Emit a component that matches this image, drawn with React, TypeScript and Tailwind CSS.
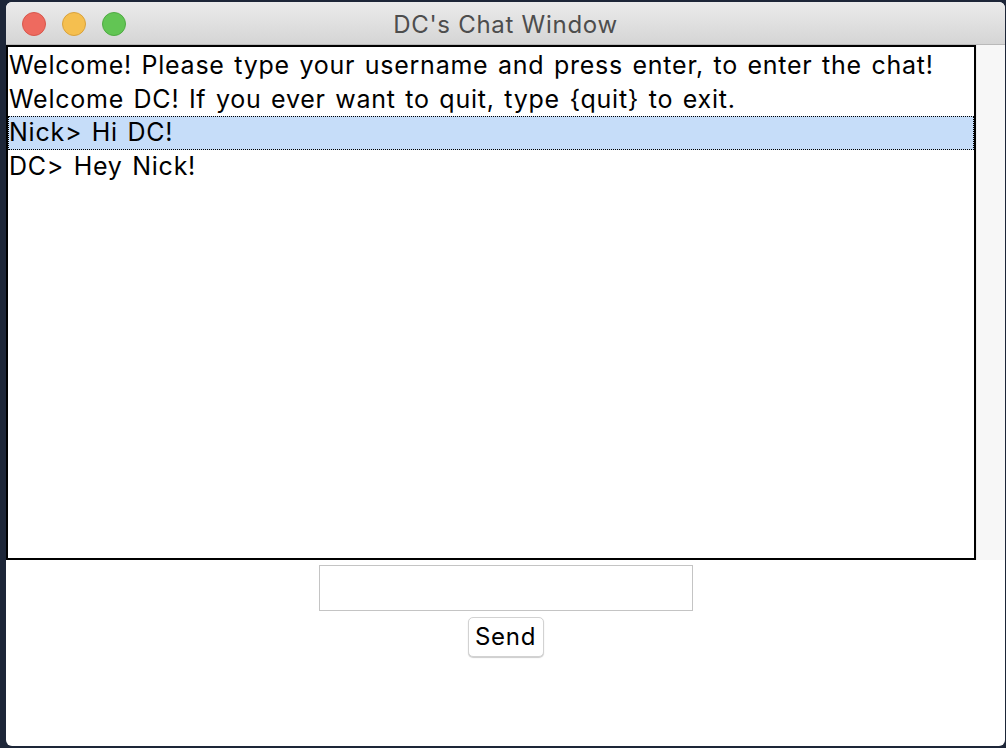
export default function App() {
  const lines = [
    "Welcome! Please type your username and press enter, to enter the chat!",
    "Welcome DC! If you ever want to quit, type {quit} to exit.",
    "Nick> Hi DC!",
    "DC> Hey Nick!",
  ];

  const font = { fontFamily: "Inter, \"Liberation Sans\", sans-serif" };

  return (
    <div className="w-[1006px] h-[748px] bg-[#1d2638] pl-[6px] pt-[2px] overflow-hidden" style={font}>
      <div className="w-[999px] h-[744px] bg-white rounded-[6px] overflow-hidden flex flex-col">
        {/* Title bar */}
        <div className="relative h-[43px] shrink-0 bg-gradient-to-b from-[#ebebeb] to-[#d5d5d5] border-b border-[#b9b9b9] flex items-center justify-center pt-[3px]">
          <div className="absolute left-[16px] top-[10px] flex gap-[16px]">
            <span className="w-[24px] h-[24px] rounded-full bg-[#ee6a5f] border border-[#d8574c]" />
            <span className="w-[24px] h-[24px] rounded-full bg-[#f5bf4f] border border-[#d9a23c]" />
            <span className="w-[24px] h-[24px] rounded-full bg-[#62c554] border border-[#4fab43]" />
          </div>
          <span className="text-[24px] tracking-[0.03em] text-[#4d4d4d]">DC's Chat Window</span>
        </div>

        {/* List area */}
        <div className="flex h-[515px] shrink-0">
          <div className="w-[970px] border-2 border-black bg-white pt-[2px] text-[25px] tracking-[0.03em] [word-spacing:1.8px] text-black leading-[33.5px]">
            {lines.map((l, i) => (
              <div
                key={i}
                className={
                  i === 2
                    ? "pl-0 h-[33.5px] bg-[#c6ddf9] border border-dotted border-black flex items-center"
                    : "pl-[1px] h-[33.5px] flex items-center"
                }
              >
                {l}
              </div>
            ))}
          </div>
          <div className="flex-1 bg-[#f7f7f7] border-l border-[#ececec]" />
        </div>

        {/* Entry + button */}
        <div className="flex flex-col items-center pt-[5px] gap-[6px]">
          <input className="w-[374px] h-[46px] border border-[#c4c4c4] outline-none px-2 text-[22px]" style={font} />
          <button className="h-[40px] w-[76px] rounded-[5px] border border-[#d2d2d2] bg-white shadow-[0_1px_1px_rgba(0,0,0,0.2)] text-[24px] tracking-[0.03em] text-black">
            Send
          </button>
        </div>
      </div>
    </div>
  );
}
